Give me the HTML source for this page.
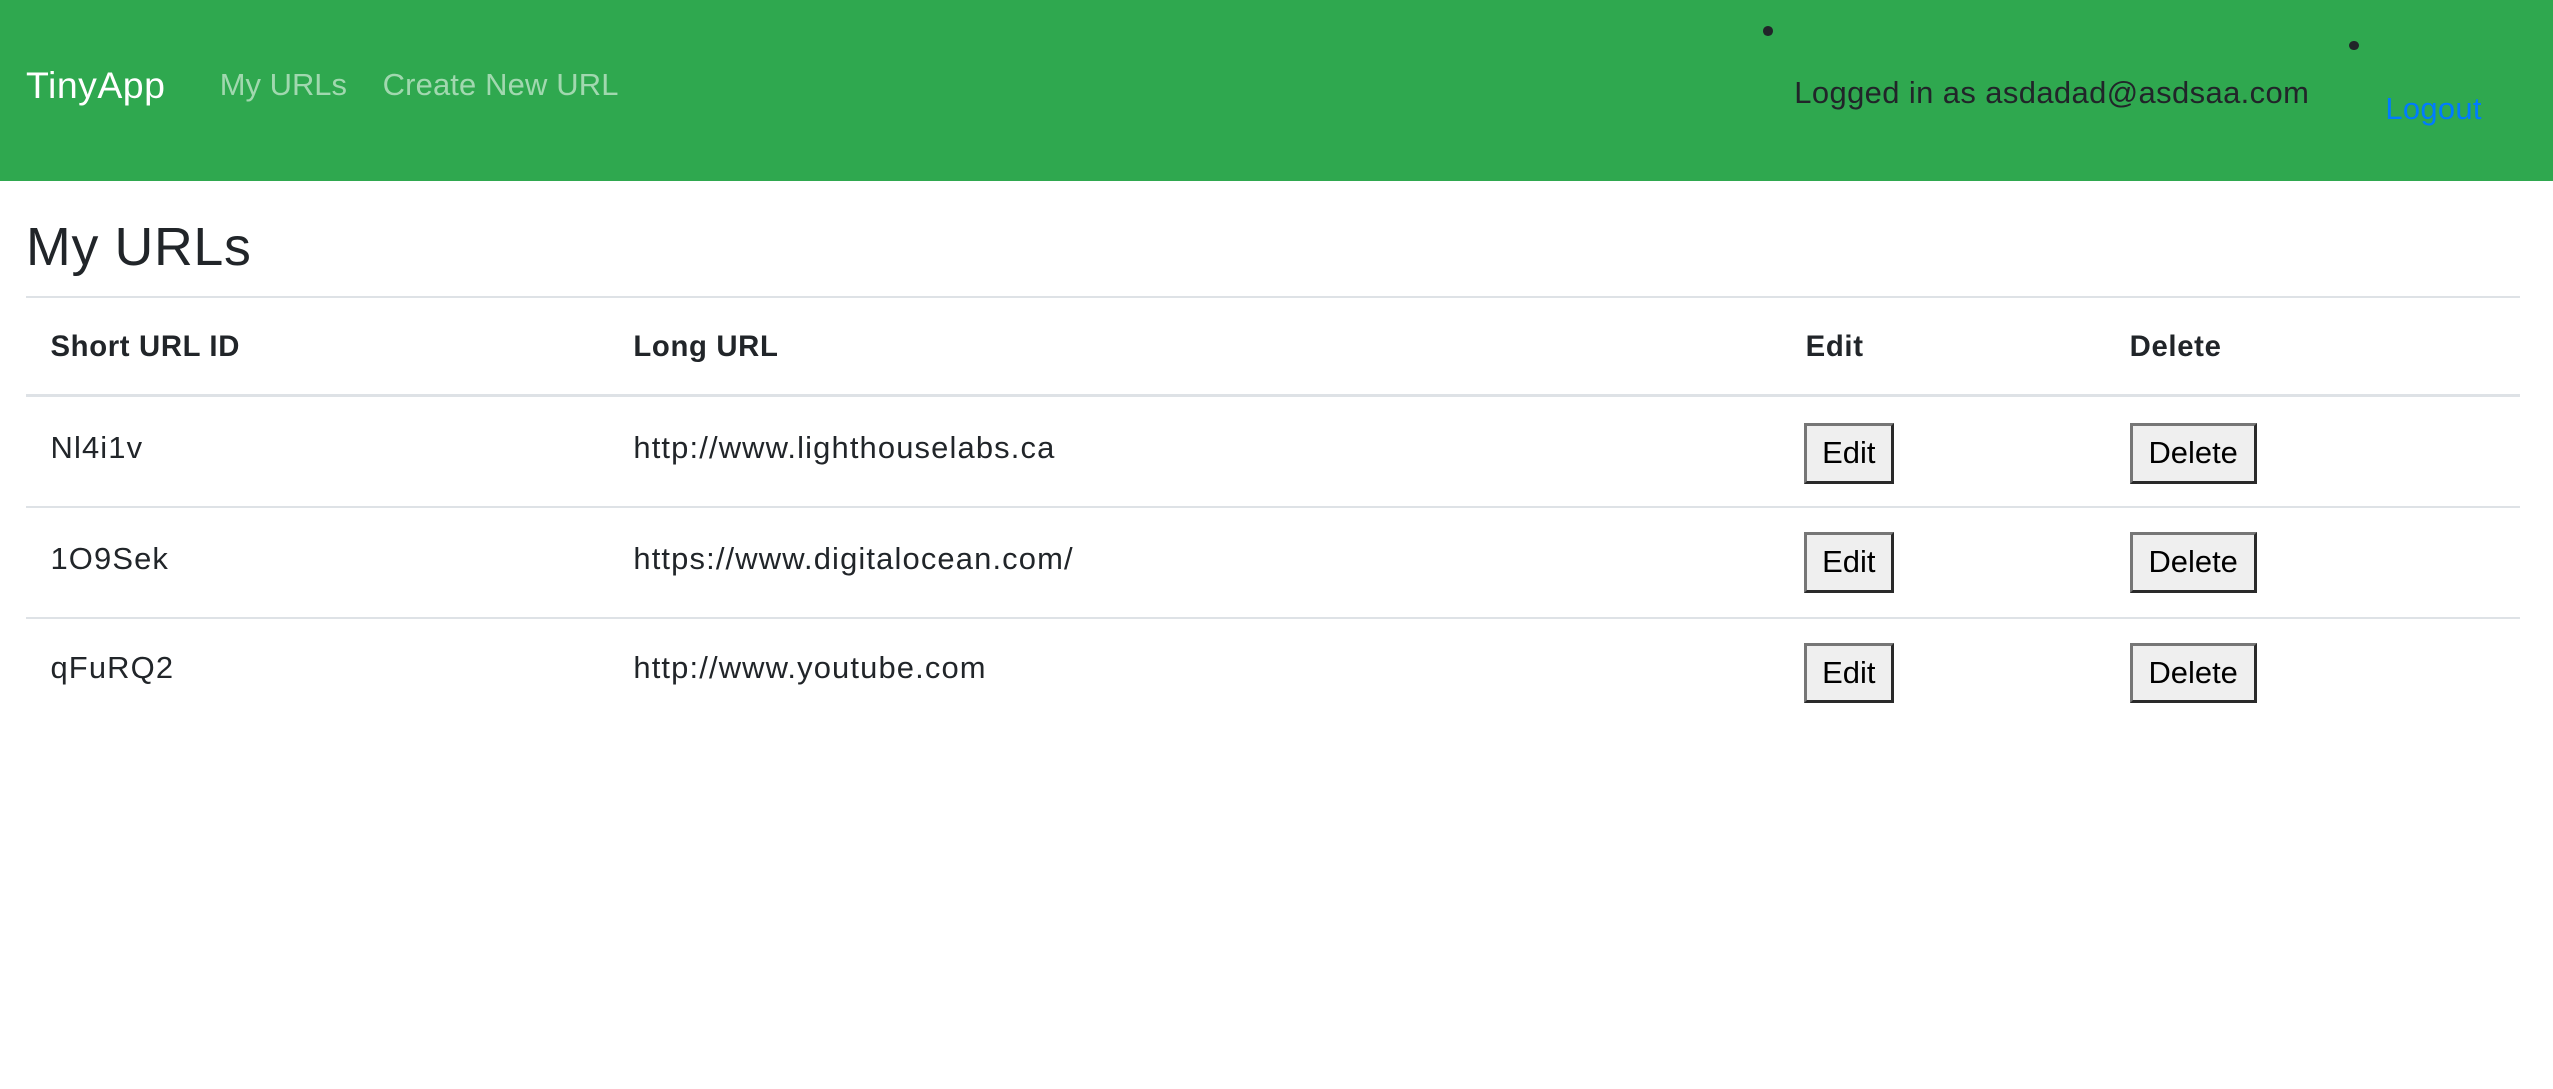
<!DOCTYPE html>
<html><head><meta charset="utf-8"><style>
html,body{margin:0;padding:0;background:#fff;}
body{zoom:1.6282;width:1568px;height:669px;position:relative;overflow:hidden;font-family:"Liberation Sans",Arial,sans-serif;color:#212529;}
.a{position:absolute;white-space:nowrap;line-height:1;}
.nav{position:absolute;left:0;top:0;width:1568px;height:111px;background:#2fa84f;}
.dot{position:absolute;width:6px;height:6px;border-radius:50%;background:#212529;}
.hl{position:absolute;left:16px;width:1532px;background:#dee2e6;}
.btn{position:absolute;box-sizing:border-box;height:37px;background:#efefef;border:2px solid;border-color:#767676 #2a2a2a #2a2a2a #767676;font-size:19px;color:#000;text-align:center;line-height:33px;font-family:"Liberation Sans",Arial,sans-serif;}
.th{font-weight:bold;font-size:18px;letter-spacing:0.4px;}
.td{font-size:19px;letter-spacing:0.7px;}
</style></head><body>
<div class="nav"></div>
<div class="a" style="left:16px;top:41px;font-size:23px;letter-spacing:0.3px;color:#fff;">TinyApp</div>
<div class="a" style="left:135px;top:43px;font-size:19px;color:rgba(255,255,255,.55);">My URLs</div>
<div class="a" style="left:235px;top:43px;font-size:19px;letter-spacing:0.1px;color:rgba(255,255,255,.55);">Create New URL</div>
<div class="dot" style="left:1083px;top:16px;"></div>
<div class="dot" style="left:1443px;top:25px;"></div>
<div class="a" style="left:1102px;top:48px;font-size:19px;letter-spacing:0.25px;color:#212529;">Logged in as asdadad@asdsaa.com</div>
<div class="a" style="left:1465px;top:58px;font-size:19px;letter-spacing:0.2px;color:#007bff;">Logout</div>

<div class="a" style="left:16px;top:136px;font-size:33px;letter-spacing:0.4px;">My URLs</div>
<div class="hl" style="top:182px;height:1px;"></div>
<div class="a th" style="left:31px;top:204px;">Short URL ID</div>
<div class="a th" style="left:389px;top:204px;">Long URL</div>
<div class="a th" style="left:1109px;top:204px;">Edit</div>
<div class="a th" style="left:1308px;top:204px;">Delete</div>
<div class="hl" style="top:242px;height:2px;"></div>

<div class="a td" style="left:31px;top:266px;">Nl4i1v</div>
<div class="a td" style="left:389px;top:266px;">http://www.lighthouselabs.ca</div>
<div class="btn" style="left:1108px;top:260px;width:55px;">Edit</div>
<div class="btn" style="left:1308px;top:260px;width:78px;">Delete</div>
<div class="hl" style="top:311px;height:1px;"></div>

<div class="a td" style="left:31px;top:334px;">1O9Sek</div>
<div class="a td" style="left:389px;top:334px;">https://www.digitalocean.com/</div>
<div class="btn" style="left:1108px;top:327px;width:55px;">Edit</div>
<div class="btn" style="left:1308px;top:327px;width:78px;">Delete</div>
<div class="hl" style="top:379px;height:1px;"></div>

<div class="a td" style="left:31px;top:401px;">qFuRQ2</div>
<div class="a td" style="left:389px;top:401px;">http://www.youtube.com</div>
<div class="btn" style="left:1108px;top:395px;width:55px;">Edit</div>
<div class="btn" style="left:1308px;top:395px;width:78px;">Delete</div>
</body></html>
